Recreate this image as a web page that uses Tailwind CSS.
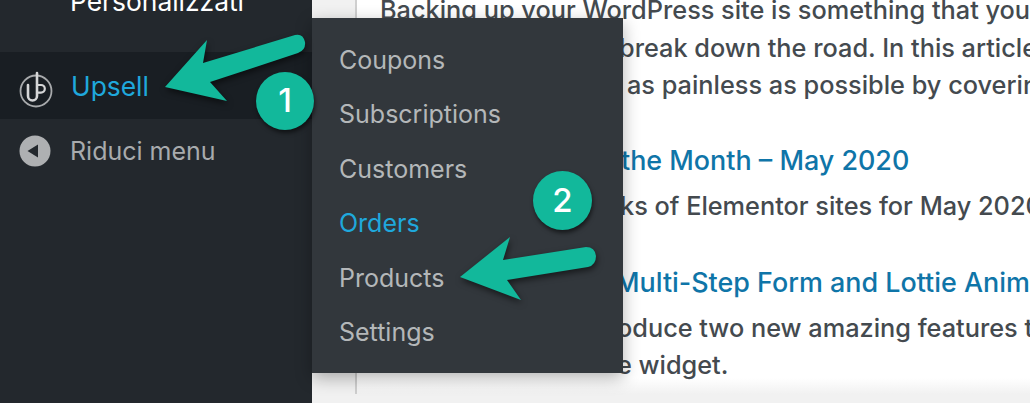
<!DOCTYPE html>
<html>
<head>
<meta charset="utf-8">
<script src="https://cdn.jsdelivr.net/npm/@tailwindcss/browser@4"></script>
</head>
<body class="bg-[#f1f1f1]">
<div class="relative flex w-[1030px] h-[403px] overflow-hidden font-['Inter',sans-serif]">

  <!-- Admin sidebar -->
  <aside class="w-[312px] shrink-0 bg-[#23282d] text-[25px]">
    <div class="pl-[70px] h-[52px] -mt-[14px] text-white text-[26.4px] leading-[30px]">Personalizzati</div>
    <div class="flex items-center h-[67px] mt-[14px] bg-[#191e23] text-[#1fa8dc]">
      <svg class="ml-[19px] w-[34px] h-[38px] mt-[6px]" viewBox="0 0 34 38" fill="none">
        <circle cx="17" cy="21" r="15.5" stroke="#a8aaac" stroke-width="1.8"/>
        <path d="M9 15v11a4.5 4.5 0 0 0 9 0V3" stroke="#d5d6d7" stroke-width="2.6" stroke-linecap="round"/>
        <path d="M18 15h4a3.8 3.8 0 0 1 0 7.6h-4" stroke="#d5d6d7" stroke-width="2.2"/>
      </svg>
      <span class="ml-[18px] mt-[3px] text-[26.4px]">Upsell</span>
    </div>
    <div class="flex items-center h-[64px] text-[#a8abad]">
      <svg class="ml-[19px] w-[32px] h-[32px]" viewBox="0 0 32 32">
        <circle cx="16" cy="16" r="15.5" fill="#aeb0b2"/>
        <path d="M8.5 16 19 9.5v13z" fill="#23282d"/>
      </svg>
      <span class="ml-[19px] mt-[2px]">Riduci menu</span>
    </div>
  </aside>

  <!-- Page content behind the flyout -->
  <main class="flex-1 pl-[43px]">
    <div class="h-[403px] bg-gradient-to-b from-white from-[96%] to-[#f1f1f1] border-l-2 border-[#cfcfcf] text-[25.3px] font-medium text-[#444a4f] whitespace-nowrap">
      <div class="pl-[23px] -mt-[9px] leading-[37.5px]">Backing up your WordPress site is something that you</div>
      <div class="pl-[262px] leading-[37.5px]">break down the road. In this article</div>
      <div class="pl-[270px] leading-[37.5px]">as painless as possible by covering</div>
      <div class="pl-[264px] mt-[38px] leading-[37.5px] text-[26.9px] text-[#0f75a8]">the Month – May 2020</div>
      <div class="pl-[263px] mt-[8px] leading-[37.5px]">ks of Elementor sites for May 2020</div>
      <div class="pl-[258px] mt-[39px] leading-[37.5px] text-[26.9px] text-[#0f75a8]">Multi-Step Form and Lottie Animations</div>
      <div class="pl-[260px] mt-[8px] leading-[37.5px]">oduce two new amazing features to</div>
      <div class="pl-[260px] -mt-[1px] leading-[37.5px]">e widget.</div>
    </div>
  </main>

  <!-- Upsell flyout -->
  <nav class="absolute left-[312px] top-[18px] w-[311px] h-[355px] bg-[#32373c] pl-[27px] pt-[15px] text-[25px] text-[#b4b7b9] shadow-[0_5px_16px_rgba(0,0,0,0.3)]">
    <div class="h-[54.4px] leading-[54px]">Coupons</div>
    <div class="h-[54.4px] leading-[54px]">Subscriptions</div>
    <div class="h-[54.4px] leading-[54px]">Customers</div>
    <div class="h-[54.4px] leading-[54px] text-[#1fa8dc]">Orders</div>
    <div class="h-[54.4px] leading-[54px]">Products</div>
    <div class="h-[54.4px] leading-[54px]">Settings</div>
  </nav>

  <!-- Callout arrows -->
  <svg class="absolute left-0 top-0 w-[1030px] h-[403px] drop-shadow-[1px_3px_3px_rgba(0,0,0,0.55)]" viewBox="0 0 1030 403">
    <path d="M165 87 207 40 203 63 295 35Q303 33 305 42 306 50 298 53L210 82 227 101z" fill="#12b89b"/>
    <path d="M460 277 510 237 503 260 586 247Q595 247 596 256 596 265 588 267L507 280 521 300z" fill="#12b89b"/>
  </svg>

  <!-- Step badges -->
  <div class="absolute left-[256px] top-[72px] w-[58px] h-[58px] rounded-full bg-[#12b89b] flex items-center justify-center text-[33px] font-medium text-white shadow-[1px_3px_4px_rgba(0,0,0,0.55)]">1</div>
  <div class="absolute left-[533px] top-[171px] w-[59px] h-[59px] rounded-full bg-[#12b89b] flex items-center justify-center text-[33px] font-medium text-white shadow-[1px_3px_4px_rgba(0,0,0,0.55)]">2</div>
</div>
</body>
</html>
